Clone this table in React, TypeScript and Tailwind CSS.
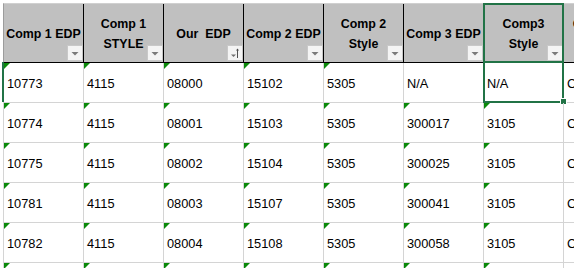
import React from 'react';

type Header = { lines: string[]; sorted?: boolean; width?: string };

const headers: Header[] = [
  { lines: ['Comp 1 EDP'] },
  { lines: ['Comp 1', 'STYLE'] },
  { lines: ['Our  EDP'], sorted: true },
  { lines: ['Comp 2 EDP'] },
  { lines: ['Comp 2', 'Style'] },
  { lines: ['Comp 3 EDP'] },
  { lines: ['Comp3', 'Style'], active: true } as Header,
  { lines: ['Comp 4', 'Style'], width: 'w-[64px]' },
];

// plain = text cell without the green "number stored as text" marker
const rows: (string | { v: string; plain: true })[][] = [
  ['10773', '4115', '08000', '15102', '5305', { v: 'N/A', plain: true }, { v: 'N/A', plain: true }, { v: 'CL-01', plain: true }],
  ['10774', '4115', '08001', '15103', '5305', '300017', '3105', { v: 'CL-02', plain: true }],
  ['10775', '4115', '08002', '15104', '5305', '300025', '3105', { v: 'CL-03', plain: true }],
  ['10781', '4115', '08003', '15107', '5305', '300041', '3105', { v: 'CL-04', plain: true }],
  ['10782', '4115', '08004', '15108', '5305', '300058', '3105', { v: 'CL-05', plain: true }],
  ['10783', '4115', '08005', '15109', '5305', '300066', '3105', { v: 'CL-06', plain: true }],
];

function FilterButton({ sorted }: { sorted?: boolean }) {
  return (
    <div className="absolute right-0 bottom-[1px] h-[16px] w-[16px] border border-[#c8c8c8] bg-[#f4f4f4]">
      {sorted ? (
        <svg width="14" height="14" viewBox="0 0 14 14" className="block">
          <path d="M3 8.5h5l-2.5 2.5z" fill="#707070" />
          <path d="M9.5 3v9" stroke="#505050" strokeWidth="1" />
          <path d="M8 4.5l1.5-2 1.5 2z" fill="#505050" />
        </svg>
      ) : (
        <svg width="14" height="14" viewBox="0 0 14 14" className="block">
          <path d="M3.5 6h7l-3.5 3.5z" fill="#7a7a7a" />
        </svg>
      )}
    </div>
  );
}

function Marker() {
  return (
    <svg width="6" height="6" viewBox="0 0 6 6" className="absolute left-0 top-0">
      <path d="M0 0h6L0 6z" fill="#0a8a0a" />
    </svg>
  );
}

export default function App() {
  return (
    <div className="relative h-[268px] w-[574px] overflow-hidden bg-white pl-[3px] pt-[3px] font-['Liberation_Sans',Arial,sans-serif] text-black">
      <div className="flex h-[60px] w-max border-y border-l border-t-[#d0d0d0] border-b-black border-l-[#9c9c9c] bg-[#c0c0c0] text-[12.4px]">
        {headers.map((h, i) => (
          <div
            key={i}
            className={`relative flex shrink-0 flex-col items-center justify-center border-r border-black pt-[2px] font-bold leading-[20px] ${h.width ?? 'w-[80px]'}`}
          >
            {h.lines.map((l) => (
              <span key={l} className="whitespace-pre">
                {l}
              </span>
            ))}
            <FilterButton sorted={h.sorted} />
            {(h as { active?: boolean }).active && (
              <div className="absolute -left-px -right-px -top-px bottom-0 border-x-2 border-t-2 border-[#217346]" />
            )}
          </div>
        ))}
      </div>

      {rows.map((r, ri) => (
        <div key={ri} className="flex h-[40px] w-max border-b border-l border-[#d4d4d4] text-[12.8px]">
          {r.map((c, ci) => {
            const plain = typeof c !== 'string';
            const text = typeof c === 'string' ? c : c.v;
            return (
              <div
                key={ci}
                className={`relative flex shrink-0 items-center border-r border-[#d4d4d4] pl-[3px] pt-[2px] ${ci === 7 ? 'w-[64px]' : 'w-[80px]'}`}
              >
                {!plain && <Marker />}
                {text}
                {ri === 0 && ci === 6 && (
                  <>
                    <div className="absolute -left-px -right-px -top-[2px] -bottom-px border-2 border-[#217346]" />
                    <div className="absolute -bottom-[3px] -right-[4px] h-[7px] w-[7px] border border-white bg-[#217346]" />
                  </>
                )}
                {ri === 0 && ci === 0 && <div className="absolute -left-[2px] -top-px bottom-0 w-[2px] bg-[#217346]" />}
              </div>
            );
          })}
        </div>
      ))}
    </div>
  );
}
